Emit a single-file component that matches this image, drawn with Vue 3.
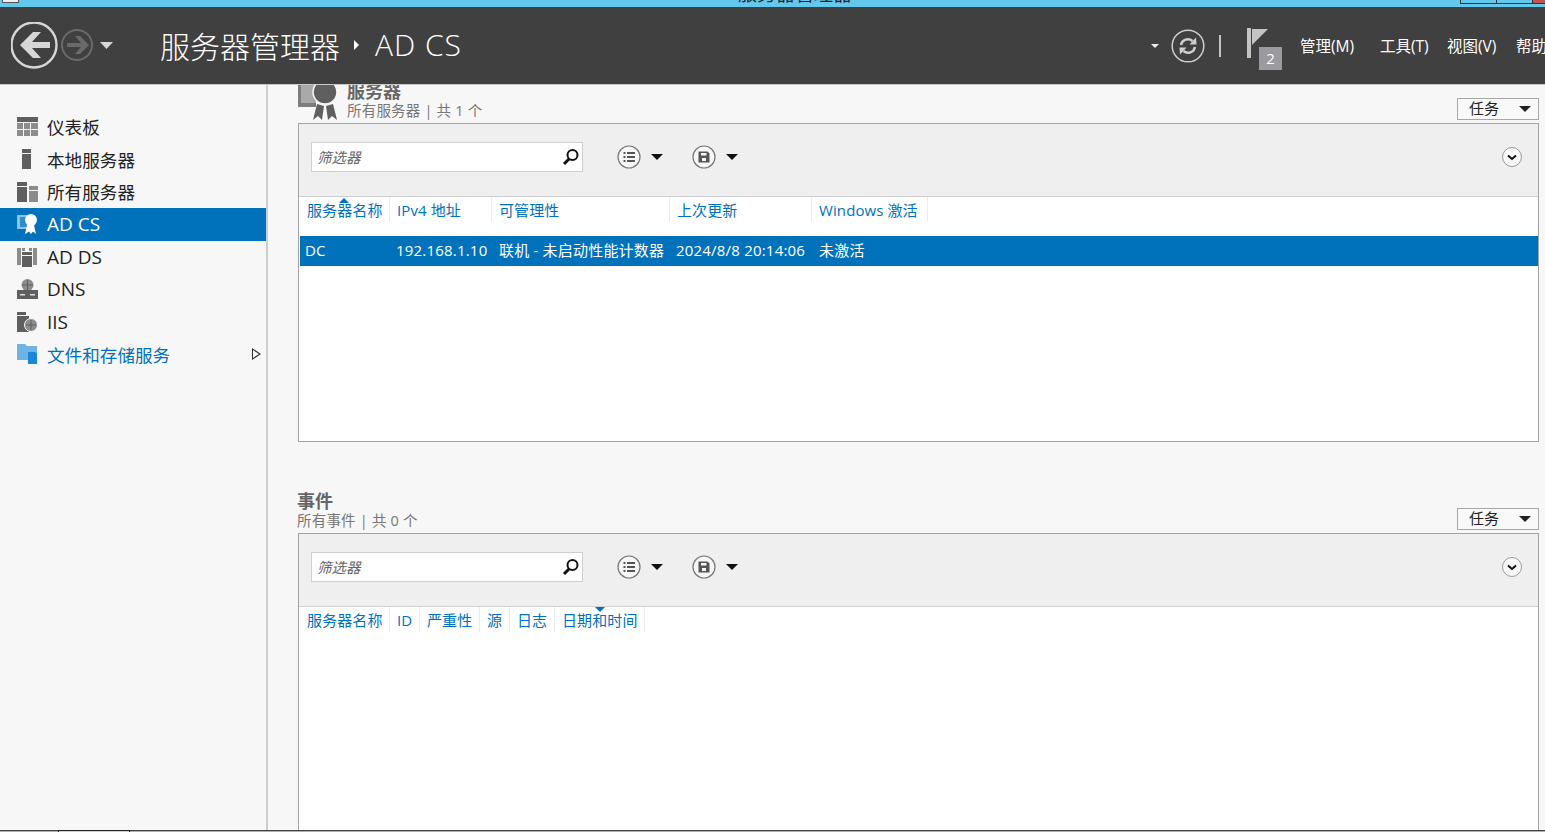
<template>
  <div class="win">
    <div class="caption">
      <span class="sysicon"></span>
      <span class="captitle">服务器管理器</span>
      <div class="winbtns">
        <span class="wb"></span>
        <span class="wb"></span>
        <span class="wb close"></span>
      </div>
    </div>

    <header class="head">
      <svg class="nav" width="112" height="50" viewBox="0 0 112 50">
        <circle cx="23" cy="23" r="22.500" fill="none" stroke="#d6d6d6" stroke-width="2.400" />
        <path d="M9 23 L22 10 H30 L21 20 H39 V26 H21 L30 36 H22 Z" fill="#d6d6d6" />
        <circle cx="66" cy="23" r="15" fill="none" stroke="#6a6a6a" stroke-width="2" />
        <path d="M78 23 L69 14 H64 L70 21 H56 V25 H70 L64 32 H69 Z" fill="#6a6a6a" />
        <path d="M89 20 H102 L95.500 27 Z" fill="#d6d6d6" />
      </svg>
      <div class="crumb">
        <span>服务器管理器</span>
        <i class="crumb-arrow"></i>
        <span class="crumb-last">AD CS</span>
      </div>
      <div class="tools">
        <i class="small-drop"></i>
        <svg class="refresh" width="34" height="34" viewBox="0 0 34 34">
          <circle cx="17" cy="17" r="15.800" fill="none" stroke="#cfcfcf" stroke-width="1.500" />
          <path d="M10 16 A7 7 0 0 1 21.500 12" fill="none" stroke="#cfcfcf" stroke-width="2.400" />
          <path d="M24 18 A7 7 0 0 1 12.500 22" fill="none" stroke="#cfcfcf" stroke-width="2.400" />
          <path d="M18.500 15.500 L25.500 15.500 L25 8.500 Z M15.500 18.500 L8.500 18.500 L9 25.500 Z" fill="#cfcfcf" />
        </svg>
        <i class="sep"></i>
        <div class="flag">
          <svg width="24" height="32" viewBox="0 0 24 32">
            <path d="M0 0 H4 V30 H0 Z" fill="#c4c4c4" />
            <path d="M5 1 H21 L5 17 Z" fill="#c4c4c4" />
          </svg>
          <span class="badge">2</span>
        </div>
        <nav class="menu">
          <span class="m1">管理(M)</span>
          <span class="m2">工具(T)</span>
          <span class="m3">视图(V)</span>
          <span class="m4">帮助(H)</span>
        </nav>
      </div>
    </header>

    <div class="body">
      <aside class="side">
        <div
          v-for="item in sideItems"
          :key="item.label"
          class="side-item"
          :class="{ active: item.active, link: item.link, latin: item.latin }"
        >
          <svg class="side-ico" width="22" height="20" viewBox="0 0 22 20" v-html="item.icon"></svg>
          <span>{{ item.label }}</span>
          <i v-if="item.link" class="side-arrow"></i>
        </div>
      </aside>

      <main class="main">
        <section class="sec sec-first">
          <div class="sec-head">
            <svg class="cert" width="42" height="42" viewBox="0 0 42 42">
              <path d="M1 0 H19 V29 H1 Z" fill="#7d7d7d" />
              <rect x="4" y="0" width="15" height="25" fill="#a9a9a9" />
              <circle cx="28" cy="14" r="12" fill="#5f5f5f" stroke="#f7f7f7" stroke-width="1.500" />
              <path d="M20 26 L16 42 L21 38 L25 42 L27 28 Z M36 26 L40 42 L35 38 L31 42 L29 28 Z" fill="#5f5f5f" />
            </svg>
            <div class="sec-titles">
              <h2>服务器</h2>
              <p>所有服务器 | 共 1 个</p>
            </div>
            <button class="task"><span>任务</span><i></i></button>
          </div>
          <div class="panel panel-a">
            <div class="bar">
              <div class="filter">
                <em>筛选器</em>
                <svg width="18" height="18" viewBox="0 0 18 18">
                  <circle cx="10.500" cy="7" r="5" fill="none" stroke="#111" stroke-width="2" />
                  <path d="M7 11 L2 16" stroke="#111" stroke-width="3" />
                </svg>
              </div>
              <div class="bar-btn">
                <svg width="26" height="26" viewBox="0 0 26 26">
                  <circle cx="13" cy="13" r="11" fill="#f6f6f6" stroke="#777" stroke-width="1.200" />
                  <path d="M7.500 9 h2 M11 9 h8 M7.500 13 h2 M11 13 h8 M7.500 17 h2 M11 17 h8" stroke="#555" stroke-width="2" />
                </svg>
                <i></i>
              </div>
              <div class="bar-btn">
                <svg width="26" height="26" viewBox="0 0 26 26">
                  <circle cx="13" cy="13" r="11" fill="#f6f6f6" stroke="#777" stroke-width="1.200" />
                  <path d="M7.500 7.500 H16.500 L18.500 9.500 V18.500 H7.500 Z" fill="#555" />
                  <rect x="10" y="9" width="5.500" height="2.500" fill="#f6f6f6" />
                  <rect x="11" y="14" width="4" height="3" fill="#f6f6f6" />
                </svg>
                <i></i>
              </div>
              <svg class="expand" width="22" height="22" viewBox="0 0 22 22">
                <circle cx="11" cy="11" r="9.500" fill="#f8f8f8" stroke="#999" />
                <path d="M7 9.500 L11 13 L15 9.500" fill="none" stroke="#111" stroke-width="2" />
              </svg>
            </div>
            <div class="cols">
              <div v-for="c in serverCols" :key="c.label" class="col" :style="{ width: c.w + 'px' }">{{ c.label }}</div>
              <i class="sort up"></i>
            </div>
            <div class="row">
              <div v-for="c in serverRow" :key="c.text" class="cell" :style="{ width: c.w + 'px' }">{{ c.text }}</div>
            </div>
          </div>
        </section>

        <section class="sec sec-second">
          <div class="sec-head">
            <div class="sec-titles">
              <h2>事件</h2>
              <p>所有事件 | 共 0 个</p>
            </div>
            <button class="task"><span>任务</span><i></i></button>
          </div>
          <div class="panel panel-b">
            <div class="bar">
              <div class="filter">
                <em>筛选器</em>
                <svg width="18" height="18" viewBox="0 0 18 18">
                  <circle cx="10.500" cy="7" r="5" fill="none" stroke="#111" stroke-width="2" />
                  <path d="M7 11 L2 16" stroke="#111" stroke-width="3" />
                </svg>
              </div>
              <div class="bar-btn">
                <svg width="26" height="26" viewBox="0 0 26 26">
                  <circle cx="13" cy="13" r="11" fill="#f6f6f6" stroke="#777" stroke-width="1.200" />
                  <path d="M7.500 9 h2 M11 9 h8 M7.500 13 h2 M11 13 h8 M7.500 17 h2 M11 17 h8" stroke="#555" stroke-width="2" />
                </svg>
                <i></i>
              </div>
              <div class="bar-btn">
                <svg width="26" height="26" viewBox="0 0 26 26">
                  <circle cx="13" cy="13" r="11" fill="#f6f6f6" stroke="#777" stroke-width="1.200" />
                  <path d="M7.500 7.500 H16.500 L18.500 9.500 V18.500 H7.500 Z" fill="#555" />
                  <rect x="10" y="9" width="5.500" height="2.500" fill="#f6f6f6" />
                  <rect x="11" y="14" width="4" height="3" fill="#f6f6f6" />
                </svg>
                <i></i>
              </div>
              <svg class="expand" width="22" height="22" viewBox="0 0 22 22">
                <circle cx="11" cy="11" r="9.500" fill="#f8f8f8" stroke="#999" />
                <path d="M7 9.500 L11 13 L15 9.500" fill="none" stroke="#111" stroke-width="2" />
              </svg>
            </div>
            <div class="cols">
              <div v-for="c in eventCols" :key="c.label" class="col" :style="{ width: c.w + 'px' }">{{ c.label }}</div>
              <i class="sort down"></i>
            </div>
          </div>
        </section>
      </main>
    </div>

    <footer class="foot"><span class="foot-tab"></span></footer>
  </div>
</template>

<script setup>
const g1 = '#5f5f5f'
const g2 = '#8c8c8c'

const sideItems = [
  {
    label: '仪表板',
    icon: `<rect x="0" y="0" width="21" height="5" fill="${g1}"/><rect x="0" y="6" width="6" height="6" fill="${g2}"/><rect x="7" y="6" width="6" height="6" fill="${g2}"/><rect x="14" y="6" width="7" height="6" fill="${g2}"/><rect x="0" y="13" width="6" height="6" fill="${g2}"/><rect x="7" y="13" width="6" height="6" fill="${g2}"/><rect x="14" y="13" width="7" height="6" fill="${g2}"/>`
  },
  {
    label: '本地服务器',
    icon: `<rect x="5" y="0" width="9" height="4" fill="${g1}"/><rect x="5" y="5" width="9" height="15" fill="${g1}"/>`
  },
  {
    label: '所有服务器',
    icon: `<rect x="0" y="0" width="10" height="4" fill="${g1}"/><rect x="0" y="5" width="10" height="15" fill="${g1}"/><rect x="12" y="4" width="9" height="4" fill="${g2}"/><rect x="12" y="9" width="9" height="11" fill="${g2}"/>`
  },
  {
    label: 'AD CS',
    active: true,
    latin: true,
    icon: `<rect x="0" y="1" width="13" height="14" fill="#8cc4e8"/><rect x="3" y="3" width="8" height="10" fill="#2f8ccb"/><circle cx="14" cy="6" r="6" fill="#fff"/><path d="M10 11 L8 20 L12 17.500 L14 20 L16 17.500 L19 20 L17 11 Z" fill="#fff"/>`
  },
  {
    label: 'AD DS',
    latin: true,
    icon: `<rect x="0" y="1" width="4" height="17" fill="${g2}"/><rect x="16" y="1" width="4" height="17" fill="${g2}"/><rect x="5" y="1" width="3" height="3" fill="${g2}"/><rect x="12" y="1" width="3" height="3" fill="${g2}"/><rect x="5" y="5" width="10" height="15" fill="${g1}"/><rect x="5" y="8" width="10" height="1" fill="#f7f7f7"/>`
  },
  {
    label: 'DNS',
    latin: true,
    icon: `<circle cx="10.500" cy="6" r="6" fill="${g2}"/><path d="M5 6 h11 M10.500 1 v10" stroke="${g1}" fill="none"/><rect x="0" y="11" width="21" height="9" fill="${g1}"/><rect x="3" y="15" width="5" height="1.500" fill="#ddd"/><rect x="13" y="15" width="5" height="1.500" fill="#ddd"/>`
  },
  {
    label: 'IIS',
    latin: true,
    icon: `<rect x="0" y="0" width="9" height="3" fill="${g1}"/><rect x="0" y="4" width="12" height="16" fill="${g1}"/><circle cx="14" cy="13" r="6.500" fill="${g2}" stroke="#f7f7f7"/><path d="M9 13 h10 M14 8 v10" stroke="${g1}" fill="none"/>`
  },
  {
    label: '文件和存储服务',
    link: true,
    icon: `<path d="M0 0 H8 L10 2 H20 V16 H0 Z" fill="#6db3e3"/><path d="M11 8 H18 L20 10 V20 H11 Z" fill="#1b87d0"/>`
  }
]

const serverCols = [
  { label: '服务器名称', w: 90 },
  { label: 'IPv4 地址', w: 102 },
  { label: '可管理性', w: 178 },
  { label: '上次更新', w: 142 },
  { label: 'Windows 激活', w: 116 }
]

const serverRow = [
  { text: 'DC', w: 90 },
  { text: '192.168.1.10', w: 103 },
  { text: '联机 - 未启动性能计数器', w: 177 },
  { text: '2024/8/8 20:14:06', w: 143 },
  { text: '未激活', w: 116 }
]

const eventCols = [
  { label: '服务器名称', w: 90 },
  { label: 'ID', w: 30 },
  { label: '严重性', w: 60 },
  { label: '源', w: 30 },
  { label: '日志', w: 45 },
  { label: '日期和时间', w: 90 }
]
</script>

<style>
html, body {
  margin: 0;
  overflow: hidden;
}
</style>

<style scoped>
.win {
  width: 1545px;
  height: 832px;
  display: flex;
  flex-direction: column;
  overflow: hidden;
  background: #f7f7f7;
  font-family: "Open Sans", "Noto Sans CJK SC", sans-serif;
}
i {
  display: block;
}

/* caption */
.caption {
  height: 7px;
  flex: none;
  background: #62c8ec;
  position: relative;
  overflow: hidden;
}
.sysicon {
  position: absolute;
  left: 2px;
  top: -12px;
  width: 15px;
  height: 13px;
  border: 1px solid #555;
  background: #eee;
}
.captitle {
  position: absolute;
  left: 738px;
  top: -17px;
  font-size: 19px;
  line-height: 22px;
  color: #222;
  white-space: nowrap;
}
.winbtns {
  position: absolute;
  right: 0;
  top: 0;
  display: flex;
}
.wb {
  width: 35px;
  height: 3px;
  border: 1px solid #333;
  border-top: 0;
  border-right: 0;
}
.wb.close {
  width: 12px;
  background: #c75050;
}

/* header */
.head {
  height: 78px;
  flex: none;
  box-sizing: border-box;
  background: #404040;
  border-bottom: 1px solid #c8c8c8;
  display: flex;
  align-items: center;
  color: #fff;
}
.nav {
  margin-left: 11px;
  margin-top: 2px;
  flex: none;
}
.crumb {
  margin-left: 37px;
  margin-top: -2px;
  display: flex;
  align-items: center;
  font-size: 30px;
  font-weight: 300;
  white-space: nowrap;
}
.crumb-arrow {
  width: 0;
  height: 0;
  margin: 0 16px 0 14px;
  border-left: 5px solid #fff;
  border-top: 5px solid transparent;
  border-bottom: 5px solid transparent;
}
.crumb-last {
  font-family: "Open Sans", sans-serif;
  font-weight: 300;
  letter-spacing: 1px;
}
.tools {
  margin-left: auto;
  display: flex;
  align-items: center;
  height: 100%;
  flex: none;
  width: 394px;
  position: relative;
}
.tools > * {
  flex: none;
}
.small-drop {
  width: 0;
  height: 0;
  border-top: 4px solid #eee;
  border-left: 4.500px solid transparent;
  border-right: 4.500px solid transparent;
}
.refresh {
  margin-left: 12px;
}
.sep {
  width: 2px;
  height: 22px;
  margin-left: 14px;
  background: #c4c4c4;
}
.flag {
  margin-left: 26px;
  width: 36px;
  height: 42px;
  position: relative;
  margin-top: 7px;
}
.badge {
  position: absolute;
  left: 12px;
  top: 19px;
  width: 23px;
  height: 23px;
  background: #9a9a9f;
  font-size: 15px;
  line-height: 23px;
  text-align: center;
}
.menu {
  margin-left: 17px;
  display: flex;
  font-size: 15.500px;
  white-space: nowrap;
}
.m1 { width: 80px; }
.m2 { width: 67px; }
.m3 { width: 69px; }

/* body */
.body {
  flex: 1;
  min-height: 0;
  display: flex;
}
.side {
  width: 268px;
  flex: none;
  box-sizing: border-box;
  padding-top: 25.500px;
  border-right: 2px solid #cdcdcd;
}
.side-item {
  height: 32.500px;
  display: flex;
  align-items: center;
  padding-left: 17px;
  font-size: 17.600px;
  color: #222;
  position: relative;
}
.side-item.latin {
  font-size: 19px;
}
.side-item.active {
  background: #0072bc;
  color: #fff;
}
.side-item.link {
  color: #0072bc;
}
.side-ico {
  margin-right: 8px;
  flex: none;
}
.side-arrow {
  position: absolute;
  left: 252px;
  top: 10px;
  width: 0;
  height: 0;
  border-left: 9px solid #333;
  border-top: 6px solid transparent;
  border-bottom: 6px solid transparent;
}
.side-arrow::after {
  content: "";
  position: absolute;
  left: -8px;
  top: -4px;
  border-left: 6px solid #f7f7f7;
  border-top: 4px solid transparent;
  border-bottom: 4px solid transparent;
}

/* main */
.main {
  flex: 1;
  min-width: 0;
  padding: 0 6px 0 30px;
  overflow: hidden;
}
.sec-first {
  margin-top: -10px;
}
.sec-second {
  margin-top: 43px;
}
.sec-head {
  display: flex;
  align-items: flex-end;
  height: 48px;
  position: relative;
}
.cert {
  position: absolute;
  left: -1px;
  top: 3px;
}
.sec-titles {
  margin-bottom: 3px;
}
.sec-first .sec-titles {
  margin-left: 49px;
}
.sec-second .sec-titles {
  margin-left: -1px;
}
.sec-titles h2 {
  margin: 0 0 -2px;
  font-size: 18px;
  line-height: 24px;
  font-weight: 700;
  color: #666;
}
.sec-titles p {
  margin: 0;
  font-size: 14.500px;
  line-height: 19px;
  letter-spacing: 0.2px;
  color: #777;
  white-space: nowrap;
}
.task {
  margin-left: auto;
  margin-bottom: 3px;
  width: 82px;
  height: 22px;
  box-sizing: border-box;
  border: 1px solid #a8a8a8;
  background: #f9f9f9;
  display: flex;
  align-items: center;
  justify-content: space-between;
  padding: 0 7px 0 11px;
  font-family: inherit;
  font-size: 15px;
  color: #222;
}
.task span {
  margin-top: -3px;
}
.task i {
  width: 0;
  height: 0;
  border-top: 6px solid #222;
  border-left: 6.500px solid transparent;
  border-right: 6.500px solid transparent;
}
.panel {
  width: 1241px;
  box-sizing: border-box;
  border: 1px solid #a3a3a3;
  background: #fff;
  position: relative;
}
.panel-a {
  height: 319px;
}
.panel-b {
  height: 320px;
}
.bar {
  height: 73px;
  box-sizing: border-box;
  background: #efefef;
  border-bottom: 1px solid #cfcfcf;
  display: flex;
  align-items: flex-start;
  padding: 18px 15px 0 12px;
}
.filter {
  width: 272px;
  height: 30px;
  box-sizing: border-box;
  border: 1px solid #cfcfcf;
  background: #fff;
  display: flex;
  align-items: center;
  justify-content: space-between;
  padding: 0 2px 0 5px;
  color: #666;
  font-size: 14.500px;
}
.filter em {
  font-style: italic;
  margin-top: -2px;
}
.bar-btn {
  display: flex;
  align-items: center;
  height: 30px;
  margin-left: 33px;
}
.bar-btn + .bar-btn {
  margin-left: 28px;
}
.bar-btn i {
  width: 0;
  height: 0;
  margin-left: 9px;
  border-top: 6px solid #111;
  border-left: 6.500px solid transparent;
  border-right: 6.500px solid transparent;
}
.expand {
  margin-left: auto;
  margin-top: 4px;
}
.cols {
  display: flex;
  height: 28px;
  padding-left: 1px;
  position: relative;
}
.col {
  box-sizing: border-box;
  height: 25px;
  padding: 2px 0 0 7px;
  font-size: 15px;
  line-height: 22px;
  letter-spacing: 0.1px;
  color: #0072bc;
  white-space: nowrap;
  border-right: 1px solid #ececec;
}
.sort {
  position: absolute;
  width: 0;
  height: 0;
  border-left: 5px solid transparent;
  border-right: 5px solid transparent;
}
.sort.up {
  left: 40px;
  top: 1px;
  border-bottom: 5px solid #0072bc;
}
.sort.down {
  left: 296px;
  top: 0;
  border-top: 5px solid #0072bc;
}
.row {
  display: flex;
  height: 30px;
  margin: 11px 0 0 1px;
  background: #0072bc;
  color: #fff;
  font-size: 15px;
  line-height: 28px;
  letter-spacing: 0.2px;
}
.cell {
  box-sizing: border-box;
  padding-left: 6px;
  white-space: nowrap;
}
.cell:first-child {
  padding-left: 5px;
}

/* footer strip */
.foot {
  height: 2px;
  flex: none;
  background: #62c8ec;
  border-top: 1px solid #444;
  box-sizing: border-box;
  position: relative;
}
.foot-tab {
  position: absolute;
  left: 58px;
  top: -1px;
  width: 72px;
  height: 2px;
  box-sizing: border-box;
  border: 1px solid #222;
  border-bottom: 0;
  background: #a8dff2;
}
</style>
